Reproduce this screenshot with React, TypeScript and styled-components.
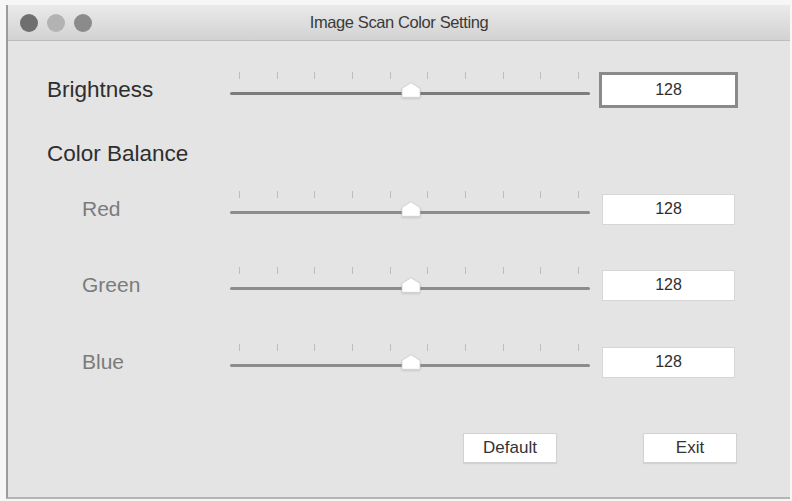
import styled, { createGlobalStyle } from "styled-components";

const GlobalStyle = createGlobalStyle`
    html, body {
        margin: 0;
        padding: 0;
        background: #f6f6f6;
        font-family: 'Liberation Sans', Arial, sans-serif;
    }
`

const Window = styled.div`
    display: flex;
    flex-direction: column;

    margin: 5px 2px 0 6px;
    height: 494px;
    box-sizing: border-box;

    background: #e4e4e4;
    border-left: 2px solid #9c9c9c;
    border-bottom: 2px solid #b4b4b4;
`

const TitleBar = styled.div`
    position: relative;
    display: flex;
    align-items: center;
    justify-content: center;

    height: 35px;
    flex-shrink: 0;

    background: linear-gradient(#eaeaea, #d2d2d2);
    border-bottom: 1px solid #bdbdbd;
`

const Lights = styled.div`
    position: absolute;
    left: 12px;
    top: 0;
    bottom: 0;

    display: flex;
    align-items: center;
    gap: 9px;
`

const Light = styled.span<{ $color: string }>`
    width: 18px;
    height: 18px;
    border-radius: 50%;
    background: ${ p => p.$color };
`

const Title = styled.div`
    font-size: 16.5px;
    color: #3a3a3a;
    letter-spacing: -0.4px;
`

const Content = styled.div`
    display: flex;
    flex-direction: column;

    padding: 29px 0 0 39px;
`

const Row = styled.div<{ $gap: number }>`
    display: grid;
    grid-template-columns: 174px 360px 139px;
    gap: 0 9px;
    align-items: center;

    height: 40px;
    margin-top: ${ p => p.$gap }px;
`

const Label = styled.div<{ $sub?: boolean }>`
    padding-left: ${ p => p.$sub ? 35 : 0 }px;

    font-size: ${ p => p.$sub ? 21 : 22.5 }px;
    color: ${ p => p.$sub ? '#7b7b7b' : '#2e2e2e' };
`

const Heading = styled.div`
    margin-top: 32px;
    height: 24px;
    line-height: 24px;

    font-size: 22.5px;
    color: #2e2e2e;
`

const Slider = styled.div`
    position: relative;
    height: 40px;
`

const Ticks = styled.div`
    display: flex;
    justify-content: space-between;

    padding: 0 11px 0 9px;
    height: 8px;
    margin-top: 2px;
`

const Tick = styled.span`
    width: 1px;
    height: 7px;
    background: #bdbdbd;
`

const Track = styled.div<{ $dark?: boolean }>`
    position: absolute;
    left: 0;
    right: 0;
    top: 22px;

    height: 3px;
    border-radius: 2px;
    background: ${ p => p.$dark ? '#7c7c7c' : '#8c8c8c' };
`

const Thumb = styled.svg<{ $pct: number }>`
    position: absolute;
    top: 12px;
    left: calc(${ p => p.$pct }% - 10px);

    width: 20px;
    height: 16px;
    filter: drop-shadow(0 1px 1px rgba(0, 0, 0, 0.15));
`

const Field = styled.div<{ $focus?: boolean }>`
    display: flex;
    align-items: center;
    justify-content: center;

    height: ${ p => p.$focus ? 36 : 31 }px;
    margin: 0 ${ p => p.$focus ? 0 : 3 }px;
    box-sizing: border-box;

    background: white;
    border: ${ p => p.$focus ? '3px solid #8a8a8a' : '1px solid #d6d6d6' };

    font-size: 16px;
    color: #2e2e2e;
`

const ButtonRow = styled.div`
    display: flex;
    gap: 86px;

    margin-top: 51px;
    padding-left: 416px;
`

const Button = styled.div`
    display: flex;
    align-items: center;
    justify-content: center;

    width: 92px;
    height: 28px;

    background: white;
    border: 1px solid #d2d2d2;
    box-shadow: 0 1px 1px rgba(0, 0, 0, 0.08);

    font-size: 17px;
    color: #333;
`

function ScanSlider({ value, dark }: { value: number, dark?: boolean }) {
    return (
        <Slider>
            <Ticks>{
                Array.from({ length: 10 }).map((_, i) => <Tick key={ i } />)
            }</Ticks>
            <Track $dark={ dark } />
            <Thumb $pct={ value / 255 * 100 } viewBox="0 0 20 16">
                <path d="M1 6.5 L10 0.8 L19 6.5 L19 14.8 Q19 15.3 18.5 15.3 L1.5 15.3 Q1 15.3 1 14.8 Z" fill="white" stroke="#cfcfcf" strokeWidth="0.8" />
            </Thumb>
        </Slider>
    )
}

const channels = [
    { name: 'Red', value: 128, gap: 23 },
    { name: 'Green', value: 128, gap: 36 },
    { name: 'Blue', value: 128, gap: 37 },
]

export default function App() {
    return (
        <>
            <GlobalStyle />
            <Window>
                <TitleBar>
                    <Lights>
                        <Light $color="#6f6f6f" />
                        <Light $color="#b3b3b3" />
                        <Light $color="#8b8b8b" />
                    </Lights>
                    <Title>Image Scan Color Setting</Title>
                </TitleBar>

                <Content>
                    <Row $gap={ 0 }>
                        <Label>Brightness</Label>
                        <ScanSlider value={ 128 } dark />
                        <Field $focus>128</Field>
                    </Row>

                    <Heading>Color Balance</Heading>

                    {
                        channels.map(channel =>
                            <Row $gap={ channel.gap } key={ channel.name }>
                                <Label $sub>{ channel.name }</Label>
                                <ScanSlider value={ channel.value } />
                                <Field>{ channel.value }</Field>
                            </Row>
                        )
                    }

                    <ButtonRow>
                        <Button>Default</Button>
                        <Button>Exit</Button>
                    </ButtonRow>
                </Content>
            </Window>
        </>
    )
}
